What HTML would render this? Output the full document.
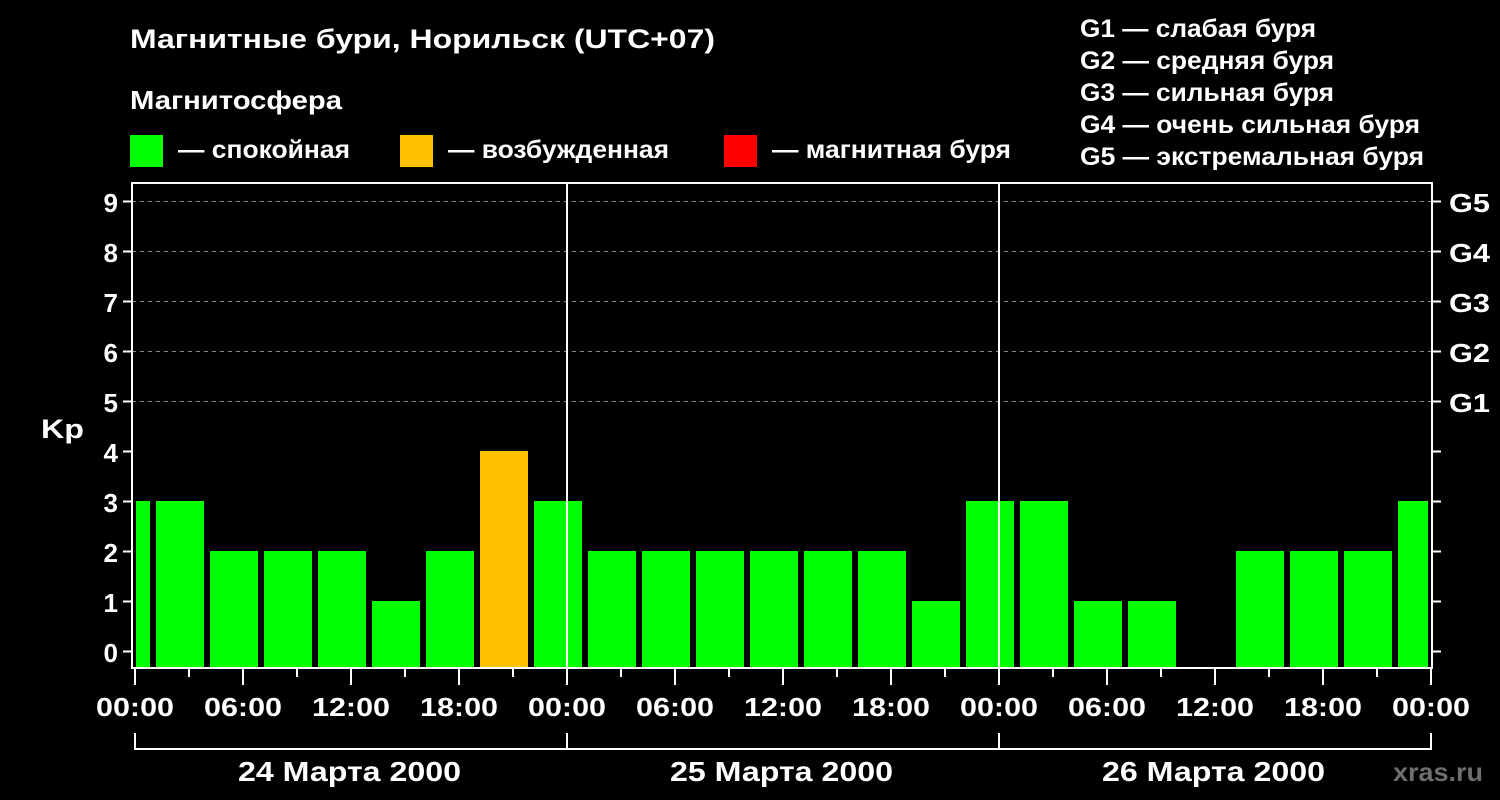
<!DOCTYPE html>
<html><head><meta charset="utf-8"><style>
html,body{margin:0;padding:0;background:#000;width:1500px;height:800px;overflow:hidden}
svg{display:block}
text{font-family:"Liberation Sans",sans-serif;font-weight:bold;fill:#fff}
</style></head><body>
<svg width="1500" height="800" viewBox="0 0 1500 800" xmlns="http://www.w3.org/2000/svg">
<text x="130" y="48" font-size="27" textLength="585" lengthAdjust="spacingAndGlyphs">Магнитные бури, Норильск (UTC+07)</text>
<text x="130" y="109" font-size="26" textLength="212" lengthAdjust="spacingAndGlyphs">Магнитосфера</text>
<rect x="130" y="135" width="33" height="32" fill="#00ff00"/>
<text x="178" y="158" font-size="25" textLength="172" lengthAdjust="spacingAndGlyphs">— спокойная</text>
<rect x="400" y="135" width="33" height="32" fill="#ffc000"/>
<text x="448" y="158" font-size="25" textLength="221" lengthAdjust="spacingAndGlyphs">— возбужденная</text>
<rect x="724" y="135" width="33" height="32" fill="#ff0000"/>
<text x="772" y="158" font-size="25" textLength="239" lengthAdjust="spacingAndGlyphs">— магнитная буря</text>
<g font-size="25">
<text x="1080" y="37" textLength="236" lengthAdjust="spacingAndGlyphs">G1 — слабая буря</text>
<text x="1080" y="69" textLength="254" lengthAdjust="spacingAndGlyphs">G2 — средняя буря</text>
<text x="1080" y="101" textLength="254" lengthAdjust="spacingAndGlyphs">G3 — сильная буря</text>
<text x="1080" y="133" textLength="340" lengthAdjust="spacingAndGlyphs">G4 — очень сильная буря</text>
<text x="1080" y="165" textLength="344" lengthAdjust="spacingAndGlyphs">G5 — экстремальная буря</text>
</g>
<g stroke="#888" stroke-width="1" stroke-dasharray="4,4">
<line x1="132" y1="201.5" x2="1432" y2="201.5"/>
<line x1="132" y1="251.5" x2="1432" y2="251.5"/>
<line x1="132" y1="301.5" x2="1432" y2="301.5"/>
<line x1="132" y1="351.5" x2="1432" y2="351.5"/>
<line x1="132" y1="401.5" x2="1432" y2="401.5"/>
</g>
<g fill="#00ff00">
<rect x="136" y="501" width="14" height="167"/>
<rect x="156" y="501" width="48" height="167"/>
<rect x="210" y="551" width="48" height="117"/>
<rect x="264" y="551" width="48" height="117"/>
<rect x="318" y="551" width="48" height="117"/>
<rect x="372" y="601" width="48" height="67"/>
<rect x="426" y="551" width="48" height="117"/>
<rect x="534" y="501" width="48" height="167"/>
<rect x="588" y="551" width="48" height="117"/>
<rect x="642" y="551" width="48" height="117"/>
<rect x="696" y="551" width="48" height="117"/>
<rect x="750" y="551" width="48" height="117"/>
<rect x="804" y="551" width="48" height="117"/>
<rect x="858" y="551" width="48" height="117"/>
<rect x="912" y="601" width="48" height="67"/>
<rect x="966" y="501" width="48" height="167"/>
<rect x="1020" y="501" width="48" height="167"/>
<rect x="1074" y="601" width="48" height="67"/>
<rect x="1128" y="601" width="48" height="67"/>
<rect x="1236" y="551" width="48" height="117"/>
<rect x="1290" y="551" width="48" height="117"/>
<rect x="1344" y="551" width="48" height="117"/>
<rect x="1398" y="501" width="30" height="167"/>
</g>
<rect x="480" y="451" width="48" height="217" fill="#ffc000"/>
<g stroke="#fff" stroke-width="2" fill="none">
<rect x="132" y="183" width="1300" height="485"/>
<line x1="567" y1="183" x2="567" y2="668"/>
<line x1="999" y1="183" x2="999" y2="668"/>
<path d="M123 201.5h9M123 251.5h9M123 301.5h9M123 351.5h9M123 401.5h9M123 451.5h9M123 501.5h9M123 551.5h9M123 601.5h9M123 651.5h9"/>
<path d="M1432 201.5h9M1432 251.5h9M1432 301.5h9M1432 351.5h9M1432 401.5h9M1432 451.5h9M1432 501.5h9M1432 551.5h9M1432 601.5h9M1432 651.5h9"/>
<path d="M135 668v17M189 668v9M243 668v17M297 668v9M351 668v17M405 668v9M459 668v17M513 668v9M567 668v17M621 668v9M675 668v17M729 668v9M783 668v17M837 668v9M891 668v17M945 668v9M999 668v17M1053 668v9M1107 668v17M1161 668v9M1215 668v17M1269 668v9M1323 668v17M1377 668v9M1431 668v17"/>
<path d="M135 733v16h1296v-16M567 733v16M999 733v16"/>
</g>
<g font-size="26" text-anchor="end">
<text x="118" y="212">9</text><text x="118" y="262">8</text><text x="118" y="312">7</text>
<text x="118" y="362">6</text><text x="118" y="412">5</text><text x="118" y="462">4</text>
<text x="118" y="512">3</text><text x="118" y="562">2</text><text x="118" y="612">1</text>
<text x="118" y="662">0</text>
</g>
<text x="41" y="438" font-size="27" textLength="43" lengthAdjust="spacingAndGlyphs">Kp</text>
<g font-size="26">
<text x="1449" y="212" textLength="41" lengthAdjust="spacingAndGlyphs">G5</text>
<text x="1449" y="262" textLength="41" lengthAdjust="spacingAndGlyphs">G4</text>
<text x="1449" y="312" textLength="41" lengthAdjust="spacingAndGlyphs">G3</text>
<text x="1449" y="362" textLength="41" lengthAdjust="spacingAndGlyphs">G2</text>
<text x="1449" y="412" textLength="41" lengthAdjust="spacingAndGlyphs">G1</text>
</g>
<g font-size="26">
<text x="96" y="716" textLength="78" lengthAdjust="spacingAndGlyphs">00:00</text>
<text x="204" y="716" textLength="78" lengthAdjust="spacingAndGlyphs">06:00</text>
<text x="312" y="716" textLength="78" lengthAdjust="spacingAndGlyphs">12:00</text>
<text x="420" y="716" textLength="78" lengthAdjust="spacingAndGlyphs">18:00</text>
<text x="528" y="716" textLength="78" lengthAdjust="spacingAndGlyphs">00:00</text>
<text x="636" y="716" textLength="78" lengthAdjust="spacingAndGlyphs">06:00</text>
<text x="744" y="716" textLength="78" lengthAdjust="spacingAndGlyphs">12:00</text>
<text x="852" y="716" textLength="78" lengthAdjust="spacingAndGlyphs">18:00</text>
<text x="960" y="716" textLength="78" lengthAdjust="spacingAndGlyphs">00:00</text>
<text x="1068" y="716" textLength="78" lengthAdjust="spacingAndGlyphs">06:00</text>
<text x="1176" y="716" textLength="78" lengthAdjust="spacingAndGlyphs">12:00</text>
<text x="1284" y="716" textLength="78" lengthAdjust="spacingAndGlyphs">18:00</text>
<text x="1392" y="716" textLength="78" lengthAdjust="spacingAndGlyphs">00:00</text>
</g>
<g font-size="28">
<text x="238" y="781" textLength="223" lengthAdjust="spacingAndGlyphs">24 Марта 2000</text>
<text x="670" y="781" textLength="223" lengthAdjust="spacingAndGlyphs">25 Марта 2000</text>
<text x="1102" y="781" textLength="223" lengthAdjust="spacingAndGlyphs">26 Марта 2000</text>
</g>
<text x="1393" y="781" font-size="26" textLength="90" lengthAdjust="spacingAndGlyphs" style="fill:#6e6e6e">xras.ru</text>
</svg>
</body></html>
